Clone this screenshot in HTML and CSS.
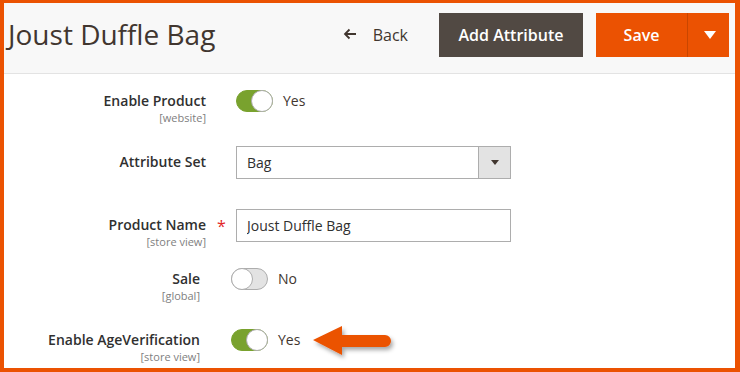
FILE: index.html
```html
<!DOCTYPE html>
<html lang="en">
<head>
    <meta charset="UTF-8">
    <meta name="viewport" content="width=device-width, initial-scale=1.0">
    <title>Joust Duffle Bag</title>
    <link rel="stylesheet" href="styles.css">
</head>
<body>
    <div class="frame">
        <div class="page-header">
            <h1 class="page-title">Joust Duffle Bag</h1>
            <div class="page-actions">
                <a href="#" class="back-link">
                    <svg class="back-arrow" width="14" height="12" viewBox="0 0 14 12">
                        <path d="M13 6 H2 M6.5 1.5 L2 6 L6.5 10.5" fill="none" stroke="#41362f" stroke-width="1.8"/>
                    </svg>
                    Back
                </a>
                <button class="btn btn-secondary">Add Attribute</button>
                <div class="split-btn">
                    <button class="btn btn-primary">Save</button>
                    <button class="btn btn-primary btn-toggle"><span class="caret"></span></button>
                </div>
            </div>
        </div>

        <div class="form">
            <div class="field field-product">
                <div class="field-label">
                    <label>Enable Product</label>
                    <span class="scope">[website]</span>
                </div>
                <div class="field-control">
                    <span class="switch is-on"></span>
                    <span class="switch-text">Yes</span>
                </div>
            </div>

            <div class="field field-set">
                <div class="field-label field-label-input">
                    <label>Attribute Set</label>
                </div>
                <div class="field-control">
                    <div class="select">
                        <span class="select-value">Bag</span>
                        <span class="select-btn"><span class="select-caret"></span></span>
                    </div>
                </div>
            </div>

            <div class="field field-name">
                <div class="field-label field-label-input">
                    <label class="required">Product Name</label>
                    <span class="scope">[store view]</span>
                </div>
                <div class="field-control">
                    <input class="text-input" type="text" value="Joust Duffle Bag">
                </div>
            </div>

            <div class="field field-sale is-offset">
                <div class="field-label">
                    <label>Sale</label>
                    <span class="scope">[global]</span>
                </div>
                <div class="field-control">
                    <span class="switch"></span>
                    <span class="switch-text">No</span>
                </div>
            </div>

            <div class="field field-age is-offset">
                <div class="field-label">
                    <label>Enable AgeVerification</label>
                    <span class="scope">[store view]</span>
                </div>
                <div class="field-control">
                    <span class="switch is-on"></span>
                    <span class="switch-text">Yes</span>
                    <svg class="callout" width="92" height="44" viewBox="0 0 92 44">
                        <defs>
                            <filter id="shade" x="-20%" y="-30%" width="150%" height="180%">
                                <feDropShadow dx="2" dy="3" stdDeviation="2" flood-color="#000" flood-opacity="0.35"/>
                            </filter>
                        </defs>
                        <path d="M2 15 L31 1 L31 10 L74 10 A6 6 0 0 1 74 22 L31 22 L31 30 Z" fill="#eb5202" filter="url(#shade)"/>
                    </svg>
                </div>
            </div>
        </div>
    </div>
</body>
</html>
```

FILE: styles.css
```css
body {
    margin: 0;
    font-family: "Open Sans", "Liberation Sans", sans-serif;
    color: #41362f;
}
.frame {
    width: 740px;
    height: 372px;
    box-sizing: border-box;
    border-style: solid;
    border-color: #eb5202;
    border-width: 3px 5px 4px 4px;
    overflow: hidden;
    background: #fff;
}
.page-header {
    display: flex;
    align-items: flex-start;
    height: 70px;
    background-color: #f8f8f8;
    border-bottom: 1px solid #e3e3e3;
    padding: 0 6px 0 4px;
}
.page-title {
    margin: 0;
    padding-top: 12px;
    font-size: 28px;
    font-weight: 400;
    line-height: 38px;
    color: #41362f;
}
.page-actions {
    display: flex;
    align-items: center;
    margin-left: auto;
    padding-top: 10px;
}
.back-link {
    display: flex;
    align-items: center;
    color: #41362f;
    text-decoration: none;
    font-size: 16px;
}
.back-arrow {
    margin-right: 16px;
    position: relative;
    top: -1px;
}
.btn {
    height: 44px;
    border: 0;
    font-family: inherit;
    font-size: 16px;
    font-weight: 600;
    color: #fff;
    cursor: pointer;
}
.btn-secondary {
    width: 144px;
    margin-left: 31px;
    background-color: #514943;
}
.split-btn {
    display: flex;
    margin-left: 13px;
}
.btn-primary {
    width: 91px;
    background-color: #eb5202;
}
.btn-toggle {
    width: 42px;
    border-left: 1px solid #c94600;
    display: flex;
    align-items: center;
    justify-content: center;
}
.caret {
    width: 0;
    height: 0;
    border-left: 6px solid transparent;
    border-right: 6px solid transparent;
    border-top: 8px solid #fff;
    margin-left: 2px;
}
.form {
    padding-top: 16px;
}
.field {
    display: grid;
    grid-template-columns: 202px 1fr;
    column-gap: 30px;
    align-items: start;
}
.field.is-offset {
    grid-template-columns: 196px 1fr;
    column-gap: 31px;
}
.field-set {
    margin-top: 21px;
}
.field-name {
    margin-top: 30px;
}
.field-sale {
    margin-top: 19px;
}
.field-age {
    margin-top: 26px;
}
.field-label {
    display: flex;
    flex-direction: column;
    align-items: flex-end;
    padding-top: 1px;
}
.field-label-input {
    padding-top: 6px;
}
.field-label label {
    font-size: 14px;
    font-weight: 600;
    line-height: 20px;
    color: #303030;
    position: relative;
}
.field-label label.required::after {
    content: "*";
    position: absolute;
    left: calc(100% + 11px);
    top: 1px;
    color: #e22626;
    font-size: 16px;
    font-weight: 400;
}
.scope {
    font-size: 11px;
    line-height: 14px;
    color: #808080;
}
.field-control {
    display: flex;
    align-items: center;
    position: relative;
}
.switch {
    width: 37px;
    height: 22px;
    box-sizing: border-box;
    border-radius: 11px;
    background-color: #e3e3e3;
    border: 1px solid #adadad;
    position: relative;
}
.switch::after {
    content: "";
    position: absolute;
    top: -1px;
    left: -1px;
    width: 22px;
    height: 22px;
    box-sizing: border-box;
    border-radius: 50%;
    background: #fff;
    border: 1px solid #adadad;
}
.switch.is-on {
    background-color: #79a22e;
    border-color: #79a22e;
}
.switch.is-on::after {
    left: auto;
    right: -1px;
}
.switch-text {
    margin-left: 10px;
    font-size: 14px;
    line-height: 22px;
}
.select {
    display: flex;
    width: 275px;
    height: 33px;
    box-sizing: border-box;
    border: 1px solid #adadad;
    background: #fff;
}
.select-value {
    flex: 1;
    padding-left: 10px;
    font-size: 14px;
    line-height: 31px;
    color: #303030;
}
.select-btn {
    width: 31px;
    background-color: #e3e3e3;
    border-left: 1px solid #adadad;
    display: flex;
    align-items: center;
    justify-content: center;
}
.select-caret {
    width: 0;
    height: 0;
    border-left: 4px solid transparent;
    border-right: 4px solid transparent;
    border-top: 5px solid #41362f;
}
.text-input {
    width: 275px;
    height: 33px;
    box-sizing: border-box;
    border: 1px solid #adadad;
    padding: 0 10px;
    font-family: inherit;
    font-size: 14px;
    color: #303030;
    margin: 0;
}
.callout {
    position: absolute;
    left: 80px;
    top: -4px;
}
```
